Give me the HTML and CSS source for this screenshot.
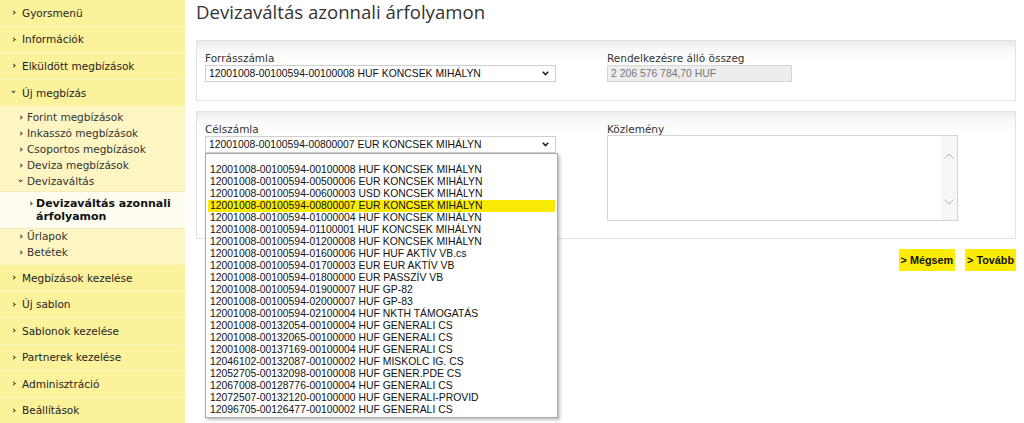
FILE: index.html
```html
<!DOCTYPE html>
<html lang="hu">
<head>
    <meta charset="UTF-8">
    <title>Devizaváltás azonnali árfolyamon</title>
    <link rel="stylesheet" href="styles.css">
</head>
<body>
    <nav class="sidebar">
        <ul class="menu">
            <li class="menu-item"><span class="chev"></span>Gyorsmenü</li>
            <li class="menu-item"><span class="chev"></span>Információk</li>
            <li class="menu-item"><span class="chev"></span>Elküldött megbízások</li>
            <li class="menu-item open"><span class="chev down"></span>Új megbízás</li>
            <li class="submenu">
                <ul>
                    <li class="sub-item"><span class="chev"></span>Forint megbízások</li>
                    <li class="sub-item"><span class="chev"></span>Inkasszó megbízások</li>
                    <li class="sub-item"><span class="chev"></span>Csoportos megbízások</li>
                    <li class="sub-item"><span class="chev"></span>Deviza megbízások</li>
                    <li class="sub-item"><span class="chev down"></span>Devizaváltás</li>
                    <li class="sub-item active"><span class="chev"></span>Devizaváltás azonnali<br>árfolyamon</li>
                    <li class="sub-item"><span class="chev"></span>Űrlapok</li>
                    <li class="sub-item"><span class="chev"></span>Betétek</li>
                </ul>
            </li>
            <li class="menu-item"><span class="chev"></span>Megbízások kezelése</li>
            <li class="menu-item"><span class="chev"></span>Új sablon</li>
            <li class="menu-item"><span class="chev"></span>Sablonok kezelése</li>
            <li class="menu-item"><span class="chev"></span>Partnerek kezelése</li>
            <li class="menu-item"><span class="chev"></span>Adminisztráció</li>
            <li class="menu-item"><span class="chev"></span>Beállítások</li>
        </ul>
    </nav>

    <main class="content">
        <h1 class="page-title">Devizaváltás azonnali árfolyamon</h1>

        <section class="panel">
            <div class="field">
                <label>Forrásszámla</label>
                <div class="select">
                    <span>12001008-00100594-00100008 HUF KONCSEK MIHÁLYN</span>
                    <svg width="7" height="5" viewBox="0 0 7 5"><path d="M0.8 0.8 L3.5 3.6 L6.2 0.8" fill="none" stroke="#222" stroke-width="1.6"/></svg>
                </div>
            </div>
            <div class="field">
                <label>Rendelkezésre álló összeg</label>
                <div class="readonly">2 206 576 784,70 HUF</div>
            </div>
        </section>

        <section class="panel panel-tall">
            <div class="field">
                <label>Célszámla</label>
                <div class="select">
                    <span>12001008-00100594-00800007 EUR KONCSEK MIHÁLYN</span>
                    <svg width="7" height="5" viewBox="0 0 7 5"><path d="M0.8 0.8 L3.5 3.6 L6.2 0.8" fill="none" stroke="#222" stroke-width="1.6"/></svg>
                </div>
                <ul class="dropdown">
                    <li class="blank"></li>
                    <li>12001008-00100594-00100008 HUF KONCSEK MIHÁLYN</li>
                    <li>12001008-00100594-00500006 EUR KONCSEK MIHÁLYN</li>
                    <li>12001008-00100594-00600003 USD KONCSEK MIHÁLYN</li>
                    <li class="selected">12001008-00100594-00800007 EUR KONCSEK MIHÁLYN</li>
                    <li>12001008-00100594-01000004 HUF KONCSEK MIHÁLYN</li>
                    <li>12001008-00100594-01100001 HUF KONCSEK MIHÁLYN</li>
                    <li>12001008-00100594-01200008 HUF KONCSEK MIHÁLYN</li>
                    <li>12001008-00100594-01600006 HUF HUF AKTÍV VB.cs</li>
                    <li>12001008-00100594-01700003 EUR EUR AKTÍV VB</li>
                    <li>12001008-00100594-01800000 EUR PASSZÍV VB</li>
                    <li>12001008-00100594-01900007 HUF GP-82</li>
                    <li>12001008-00100594-02000007 HUF GP-83</li>
                    <li>12001008-00100594-02100004 HUF NKTH TÁMOGATÁS</li>
                    <li>12001008-00132054-00100004 HUF GENERALI CS</li>
                    <li>12001008-00132065-00100000 HUF GENERALI CS</li>
                    <li>12001008-00137169-00100004 HUF GENERALI CS</li>
                    <li>12046102-00132087-00100002 HUF MISKOLC IG. CS</li>
                    <li>12052705-00132098-00100008 HUF GENER.PDE CS</li>
                    <li>12067008-00128776-00100004 HUF GENERALI CS</li>
                    <li>12072507-00132120-00100000 HUF GENERALI-PROVID</li>
                    <li>12096705-00126477-00100002 HUF GENERALI CS</li>
                </ul>
            </div>
            <div class="field">
                <label>Közlemény</label>
                <div class="textarea">
                    <div class="scrollbar">
                        <svg width="10" height="6" viewBox="0 0 10 6"><path d="M0.5 5.5 L5 1 L9.5 5.5" fill="none" stroke="#b8b8b8" stroke-width="1"/></svg>
                        <svg width="10" height="6" viewBox="0 0 10 6"><path d="M0.5 0.5 L5 5 L9.5 0.5" fill="none" stroke="#b8b8b8" stroke-width="1"/></svg>
                    </div>
                </div>
            </div>
        </section>

        <div class="actions">
            <button class="btn">&gt; Mégsem</button>
            <button class="btn">&gt; Tovább</button>
        </div>
    </main>
</body>
</html>
```

FILE: styles.css
```css
* {
    margin: 0;
    padding: 0;
    box-sizing: border-box;
}

body {
    display: flex;
    background: #fff;
    color: #222;
    font-family: 'DejaVu Sans', Verdana, sans-serif;
    font-size: 10.5px;
    height: 423px;
    overflow: hidden;
}

ul {
    list-style: none;
}

/* sidebar */

.sidebar {
    width: 185px;
    flex-shrink: 0;
    background: #fcf29c;
    height: 423px;
}

.menu-item {
    height: 26.5px;
    display: flex;
    align-items: center;
    padding-left: 12px;
    border-bottom: 1px solid #f9f3c6;
    color: #1e1e1e;
}

.menu-item.open {
    border-bottom: none;
}

.chev {
    display: inline-block;
    width: 3px;
    height: 3px;
    border-right: 1px solid #333;
    border-bottom: 1px solid #333;
    transform: rotate(-45deg);
    margin-right: 7px;
}

.chev.down {
    transform: rotate(45deg) translate(-1px, -1px);
}

.submenu {
    background: #fdf6c2;
    padding: 3px 0 4px;
    border-bottom: 1px solid #f9f3c6;
}

.sub-item {
    height: 16px;
    display: flex;
    align-items: center;
    padding-left: 19px;
    color: #333;
}

.sub-item .chev {
    margin-right: 5px;
    width: 3px;
    height: 3px;
}

.sub-item.active {
    height: auto;
    align-items: flex-start;
    background: #fffdef;
    border-top: 1px solid #f1ebbe;
    border-bottom: 1px solid #f1ebbe;
    margin: 2px 0 -1px;
    padding: 5px 0 5px 29px;
    line-height: 13px;
    font-weight: bold;
    font-size: 11px;
    color: #111;
}

.sub-item.active .chev {
    margin-top: 5px;
    margin-right: 4px;
}

/* main */

.content {
    flex: 1;
    padding: 0 8px 0 11px;
}

.page-title {
    font-family: 'Open Sans', sans-serif;
    font-weight: normal;
    font-size: 18.6px;
    line-height: 24px;
    color: #333;
    margin-bottom: 16px;
}

.panel {
    display: flex;
    height: 61px;
    border: 1px solid #e2e2e2;
    background: linear-gradient(#ebebeb 0, #f8f8f8 8px, #fff 20px);
    padding: 11px 0 0 8px;
}

.panel-tall {
    height: 128px;
    margin-top: 10px;
}

.field {
    position: relative;
    width: 402px;
}

.field label {
    display: block;
    line-height: 13px;
    color: #333;
}

.select {
    width: 351px;
    height: 17px;
    border: 1px solid #cfcfcf;
    background: #fff;
    display: flex;
    align-items: center;
    justify-content: space-between;
    padding: 0 6px 0 3px;
    font-family: 'Liberation Sans', Arial, sans-serif;
    font-size: 10.4px;
    color: #111;
}

.readonly {
    width: 185px;
    height: 17px;
    border: 1px solid #d6d6d6;
    background: #ededed;
    padding: 0 3px;
    line-height: 15px;
    font-family: 'Liberation Sans', Arial, sans-serif;
    font-size: 10.4px;
    color: #777;
}

.textarea {
    width: 351px;
    height: 86px;
    margin-top: -1px;
    border: 1px solid #d4d4d4;
    background: #fff;
    display: flex;
    justify-content: flex-end;
}

.scrollbar {
    width: 16px;
    background: #f6f6f6;
    display: flex;
    flex-direction: column;
    justify-content: space-between;
    align-items: center;
    padding: 17px 0 15px;
}

.dropdown {
    position: absolute;
    top: 30px;
    left: 0;
    width: 353px;
    height: 265px;
    background: #fff;
    border: 1px solid #a9a9a9;
    box-shadow: 2px 2px 3px rgba(0, 0, 0, 0.25);
    padding: 0 2px;
    font-family: 'Liberation Sans', Arial, sans-serif;
    font-size: 10.4px;
    color: #111;
    z-index: 5;
}

.dropdown li {
    height: 12px;
    line-height: 12px;
    padding-left: 2px;
    white-space: nowrap;
}

.dropdown li.blank {
    height: 10px;
}

.dropdown li.selected {
    background: #f9ea06;
}

.actions {
    display: flex;
    justify-content: flex-end;
    gap: 10px;
    margin-top: 10px;
}

.btn {
    background: #fdec00;
    border: none;
    height: 22px;
    padding: 0 2px;
    font-family: 'Liberation Sans', Arial, sans-serif;
    font-weight: bold;
    font-size: 10.8px;
    color: #111;
}
```
